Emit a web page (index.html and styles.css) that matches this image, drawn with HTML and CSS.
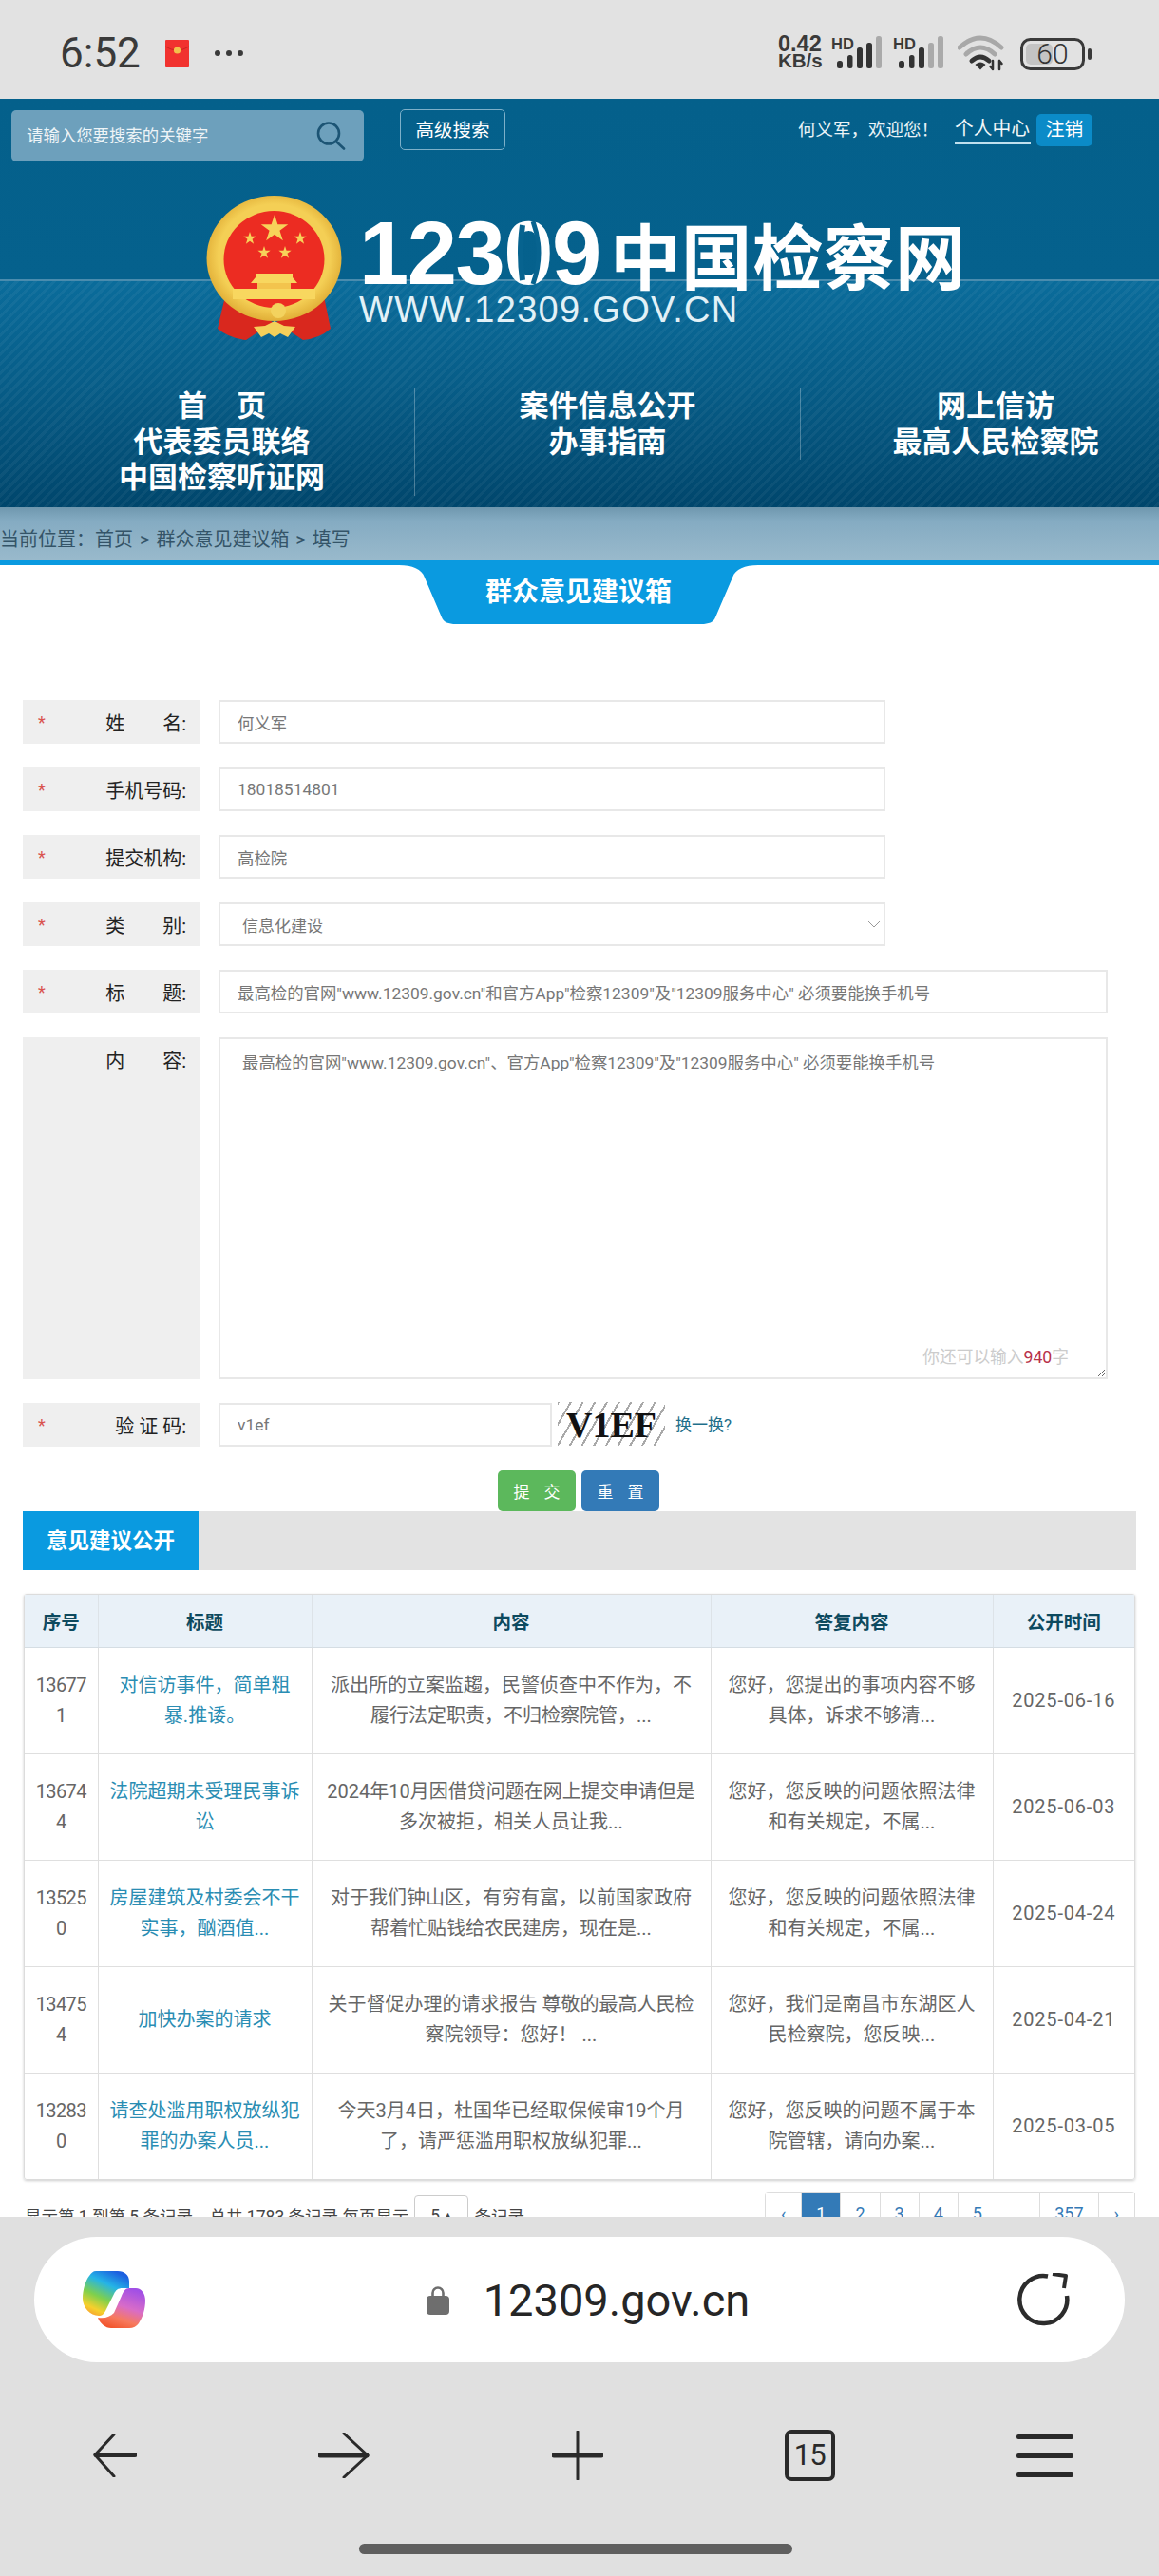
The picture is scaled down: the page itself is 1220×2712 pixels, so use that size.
FILE: index.html
```html
<!DOCTYPE html>
<html lang="zh-CN">
<head>
<meta charset="utf-8">
<title>群众意见建议箱</title>
<link rel="stylesheet" href="styles.css">
</head>
<body>
<div class="phone">
  <div class="statusbar">
    <div class="status-left">
      <span class="clock">6:52</span>
      <svg class="redpacket" width="25" height="29" viewBox="0 0 25 29"><rect width="25" height="29" rx="1" fill="#f1322f"/><path d="M0 7 Q12.5 15 25 7" fill="none" stroke="#c92523" stroke-width="1"/><circle cx="12.5" cy="11" r="3.6" fill="#f3c14b"/></svg>
      <span class="moredots"><i></i><i></i><i></i></span>
    </div>
    <div class="status-right">
      <div class="netspeed"><span class="speed">0.42</span><span class="unit">KB/s</span></div>
      <svg class="signal" width="56" height="36" viewBox="0 0 56 36"><text x="0" y="14" class="hd">HD</text><rect x="6" y="26" width="6" height="8" rx="2.5" fill="#333"/><rect x="17" y="20" width="5.500" height="14" rx="2.500" fill="#333"/><rect x="27" y="12" width="6" height="22" rx="2.500" fill="#333"/><rect x="37" y="7" width="6" height="27" rx="2.500" fill="#333"/><rect x="47" y="0" width="6" height="34" rx="2.500" fill="#aaa"/></svg>
      <svg class="signal" width="56" height="36" viewBox="0 0 56 36"><text x="0" y="14" class="hd">HD</text><rect x="6" y="26" width="6" height="8" rx="2.500" fill="#333"/><rect x="17" y="20" width="5.500" height="14" rx="2.500" fill="#333"/><rect x="27" y="12" width="6" height="22" rx="2.500" fill="#333"/><rect x="37" y="7" width="6" height="27" rx="2.500" fill="#aaa"/><rect x="47" y="0" width="6" height="34" rx="2.500" fill="#aaa"/></svg>
      <svg class="wifi" width="52" height="38" viewBox="0 0 52 38" fill="none" stroke-linecap="round"><path d="M2 13 Q24 -7 46 13" stroke="#a8a8a8" stroke-width="5"/><path d="M9 20 Q24 6 39 20" stroke="#a8a8a8" stroke-width="5"/><path d="M15 27 Q24 19 33 27" stroke="#333" stroke-width="5"/><path d="M20 31 L24 35 L28 31 Q24 28 20 31Z" fill="#333" stroke="#333" stroke-width="2"/><path d="M37 27V36M34.500 33L37 36M44 36V27M44 27L46.500 30" stroke="#333" stroke-width="2.500"/></svg>
      <svg class="battery" width="76" height="34" viewBox="0 0 76 34"><rect x="1.500" y="1.500" width="65" height="31" rx="9" fill="none" stroke="#3a3a3a" stroke-width="3"/><rect x="6" y="6" width="28" height="22" rx="5" fill="#c4c4c4"/><rect x="71" y="11" width="4" height="12" rx="2" fill="#3a3a3a"/><text x="34" y="27" class="batt">60</text></svg>
    </div>
  </div>

  <div class="viewport">
    <header class="site-header">
      <div class="toolbar">
        <div class="search">
          <span class="search-text">请输入您要搜索的关键字</span>
          <svg width="32" height="30" viewBox="0 0 32 30" fill="none" stroke="#1c5474" stroke-width="2.600"><ellipse cx="13" cy="12.500" rx="11" ry="11"/><path d="M21 21 L29 28.500" stroke-linecap="round"/></svg>
        </div>
        <a class="adv-search">高级搜索</a>
        <div class="userbar">
          <span class="welcome">何义军，欢迎您！</span>
          <a class="usercenter">个人中心</a>
          <a class="logout">注销</a>
        </div>
      </div>

      <div class="brand">
        <svg class="emblem" width="143" height="154" viewBox="0 0 143 154">
          <defs>
            <polygon id="star" points="0,-1 .2245,-.309 .951,-.309 .363,.118 .588,.809 0,.382 -.588,.809 -.363,.118 -.951,-.309 -.2245,-.309"/>
            <radialGradient id="gold" cx=".5" cy=".48" r=".55"><stop offset=".75" stop-color="#f4cf55"/><stop offset="1" stop-color="#dca62f"/></radialGradient>
          </defs>
          <path d="M20 106 L12 140 Q24 150 42 152 L60 140 L72 134 L84 140 L102 152 Q120 150 131 140 L124 106 L72 134Z" fill="#d9281e"/>
          <ellipse cx="71.500" cy="66" rx="71" ry="66" fill="url(#gold)"/>
          <ellipse cx="71.500" cy="67" rx="53" ry="51" fill="#ec2c22"/>
          <use href="#star" transform="translate(72 35) scale(15)" fill="#f7d25a"/>
          <use href="#star" transform="translate(46 45) scale(7)" fill="#f7d25a"/>
          <use href="#star" transform="translate(99 45) scale(7)" fill="#f7d25a"/>
          <use href="#star" transform="translate(61 60) scale(7)" fill="#f7d25a"/>
          <use href="#star" transform="translate(83 60) scale(7)" fill="#f7d25a"/>
          <path d="M52 82H91V86L96 92H47L52 86Z" fill="#f8d75f"/>
          <rect x="54" y="92" width="35" height="6" fill="#f3c44d"/>
          <path d="M28 98H115V109H28Z" fill="#f8d75f"/>
          <circle cx="76" cy="121" r="8" fill="#f3d25e"/>
          <path d="M50 138 L62 137 L72 132 L82 137 L94 138 L86 149 L78 145 L72 149 L66 145 L58 149Z" fill="#f4d05a"/>
        </svg>
        <div class="brand-text">
          <div class="brand-main"><span class="brand-num">12309</span><span class="brand-cn">中国检察网</span>
            <svg class="phone-slit" width="54" height="70" viewBox="0 0 54 70" fill="none"><path d="M22 6 Q18 35 22 64" stroke="#07638f" stroke-width="6"/><path d="M33 2 Q45 35 33 68" stroke="#07638f" stroke-width="5"/></svg>
          </div>
          <div class="brand-url">WWW.12309.GOV.CN</div>
        </div>
      </div>

      <nav class="mainnav">
        <ul>
          <li><a>首　页</a><a>代表委员联络</a><a>中国检察听证网</a></li>
          <li><a>案件信息公开</a><a>办事指南</a></li>
          <li><a>网上信访</a><a>最高人民检察院</a></li>
        </ul>
      </nav>
    </header>

    <div class="crumbs">当前位置：首页 &gt; 群众意见建议箱 &gt; 填写</div>
    <div class="tab-wrap"><h1 class="tab">群众意见建议箱</h1></div>

    <main class="content">
      <form class="form">
        <div class="row"><label class="lbl"><b>*</b><span>姓　　名:</span></label><input class="field w-mid" value="何义军"></div>
        <div class="row"><label class="lbl"><b>*</b><span>手机号码:</span></label><input class="field w-mid" value="18018514801"></div>
        <div class="row"><label class="lbl"><b>*</b><span>提交机构:</span></label><input class="field w-mid" value="高检院"></div>
        <div class="row"><label class="lbl"><b>*</b><span>类　　别:</span></label>
          <div class="selectbox w-mid"><span>信息化建设</span>
            <svg width="14" height="8" viewBox="0 0 14 8" fill="none" stroke="#999" stroke-width="1"><path d="M1 1L7 7L13 1"/></svg>
          </div>
        </div>
        <div class="row"><label class="lbl"><b>*</b><span>标　　题:</span></label><input class="field w-full" value="最高检的官网&quot;www.12309.gov.cn&quot;和官方App&quot;检察12309&quot;及&quot;12309服务中心&quot; 必须要能换手机号"></div>
        <div class="row row-tall"><label class="lbl lbl-top"><span>内　　容:</span></label>
          <div class="area-wrap">
            <textarea class="area">最高检的官网"www.12309.gov.cn"、官方App"检察12309"及"12309服务中心" 必须要能换手机号</textarea>
            <span class="counter">你还可以输入<em>940</em>字</span>
          </div>
        </div>
        <div class="row"><label class="lbl"><b>*</b><span>验 证 码:</span></label>
          <input class="field w-code" value="v1ef">
          <span class="captcha">V1EF</span>
          <a class="swap">换一换?</a>
        </div>
        <div class="actions"><button type="button" class="btn btn-ok">提 交</button><button type="button" class="btn btn-reset">重 置</button></div>
      </form>

      <div class="section-bar"><h2>意见建议公开</h2></div>

      <div class="table-wrap">
        <table class="list">
          <colgroup><col class="c1"><col class="c2"><col class="c3"><col class="c4"><col class="c5"></colgroup>
          <thead><tr><th>序号</th><th>标题</th><th>内容</th><th>答复内容</th><th>公开时间</th></tr></thead>
          <tbody>
            <tr><td class="seq">13677<br>1</td><td><a>对信访事件，简单粗<br>暴.推诿。</a></td><td>派出所的立案监趨，民警侦查中不作为，不<br>履行法定职责，不归检察院管，...</td><td>您好，您提出的事项内容不够<br>具体，诉求不够清...</td><td class="date">2025-06-16</td></tr>
            <tr><td class="seq">13674<br>4</td><td><a>法院超期未受理民事诉<br>讼</a></td><td>2024年10月因借贷问题在网上提交申请但是<br>多次被拒，相关人员让我...</td><td>您好，您反映的问题依照法律<br>和有关规定，不属...</td><td class="date">2025-06-03</td></tr>
            <tr><td class="seq">13525<br>0</td><td><a>房屋建筑及村委会不干<br>实事，酗酒值...</a></td><td>对于我们钟山区，有穷有富，以前国家政府<br>帮着忙贴钱给农民建房，现在是...</td><td>您好，您反映的问题依照法律<br>和有关规定，不属...</td><td class="date">2025-04-24</td></tr>
            <tr><td class="seq">13475<br>4</td><td><a>加快办案的请求</a></td><td>关于督促办理的请求报告 尊敬的最高人民检<br>察院领导：您好！ ...</td><td>您好，我们是南昌市东湖区人<br>民检察院，您反映...</td><td class="date">2025-04-21</td></tr>
            <tr><td class="seq">13283<br>0</td><td><a>请查处滥用职权放纵犯<br>罪的办案人员...</a></td><td>今天3月4日，杜国华已经取保候审19个月<br>了，请严惩滥用职权放纵犯罪...</td><td>您好，您反映的问题不属于本<br>院管辖，请向办案...</td><td class="date">2025-03-05</td></tr>
          </tbody>
        </table>
      </div>

      <div class="pager-row">
        <div class="summary"><span>显示第 1 到第 5 条记录，总共 1783 条记录 每页显示</span><span class="pagesize">5 ▴</span><span>条记录</span></div>
        <ul class="pagination"><li>‹</li><li class="active">1</li><li>2</li><li>3</li><li>4</li><li>5</li><li class="gap">...</li><li>357</li><li>›</li></ul>
      </div>
    </main>
  </div>

  <div class="browser">
    <div class="addressbar">
      <svg class="copilot" width="66" height="60" viewBox="0 0 66 60">
        <defs>
          <linearGradient id="cpA" x1=".7" y1="0" x2=".2" y2="1"><stop offset="0" stop-color="#1c5fe0"/><stop offset=".3" stop-color="#25b4e6"/><stop offset=".6" stop-color="#7fd04c"/><stop offset=".85" stop-color="#f6d02c"/><stop offset="1" stop-color="#f7a030"/></linearGradient>
          <linearGradient id="cpB" x1=".7" y1="0" x2=".3" y2="1"><stop offset="0" stop-color="#a04fe6"/><stop offset=".45" stop-color="#d86cc8"/><stop offset=".75" stop-color="#f77a5e"/><stop offset="1" stop-color="#f2552c"/></linearGradient>
        </defs>
        <path d="M14 0H37C44 0 49 4 49 11V18H42C37 18 35 20 33 24L24 42C22 46 20 47 17 47C8 47 0 38 0 29C0 20 3 10 7 5C9 2 11 0 14 0Z" fill="url(#cpA)"/>
        <path d="M49 18H56C62 18 66 24 66 31C66 40 63 49 59 55C57 58 53 60 49 60H30C24 60 18 55 16 49C24 50 29 48 33 44L41 26C43 21 45 18 49 18Z" fill="url(#cpB)"/>
      </svg>
      <div class="url">
        <svg width="24" height="31" viewBox="0 0 24 31"><path d="M6.500 14V8a5.500 5.500 0 0 1 11 0v6" fill="none" stroke="#6e6e6e" stroke-width="2.600"/><rect y="11" width="24" height="20" rx="4" fill="#6e6e6e"/></svg>
        <span>12309.gov.cn</span>
      </div>
      <svg class="reload" width="56" height="56" viewBox="0 0 56 56" fill="none" stroke="#2c2c2c" stroke-width="4.500"><path d="M32 3.500A25 25 0 1 0 52 24"/><path d="M37 1L51 3L49 16" stroke-linejoin="round" stroke-width="4"/></svg>
    </div>
    <div class="toolrow">
      <svg width="46" height="46" viewBox="0 0 46 46" fill="none" stroke="#2a2a2a"><path d="M22 1L2 22.500L22 45" stroke-width="3" stroke-linecap="round" stroke-linejoin="round"/><path d="M3 22.500H44" stroke-width="5" stroke-linecap="round"/></svg>
      <svg width="54" height="48" viewBox="0 0 54 48" fill="none" stroke="#2a2a2a"><path d="M27 1L52 24L27 47" stroke-width="3" stroke-linecap="round" stroke-linejoin="round"/><path d="M2 24H51" stroke-width="5" stroke-linecap="round"/></svg>
      <svg width="54" height="52" viewBox="0 0 54 52" fill="none" stroke="#2a2a2a"><path d="M27 1V51" stroke-width="3" stroke-linecap="round"/><path d="M2 26H52" stroke-width="5" stroke-linecap="round"/></svg>
      <div class="tabcount">15</div>
      <div class="menu"><i></i><i></i><i></i></div>
    </div>
    <div class="homebar"></div>
  </div>
</div>
</body>
</html>
```
FILE: styles.css
```css
* { box-sizing: border-box; }
html, body { margin: 0; padding: 0; }
body { font-family: Roboto, "Noto Sans CJK SC", sans-serif; background: #fff; color: #333; }
.phone { width: 1220px; height: 2712px; display: flex; flex-direction: column; overflow: hidden; }

/* status bar */
.statusbar { height: 104px; flex: none; background: #e2e2e2; display: flex; justify-content: space-between; align-items: flex-start; padding: 0 70px 0 63px; }
.status-left { display: flex; align-items: center; height: 56px; margin-top: 28px; }
.clock { font-size: 44px; font-weight: 400; line-height: 56px; color: #3a3a3a; width: 111px; white-space: nowrap; }
.redpacket { display: block; }
.moredots { display: flex; gap: 6px; margin-left: 27px; }
.moredots i { width: 6px; height: 6px; border-radius: 50%; background: #3a3a3a; }
.status-right { display: flex; align-items: flex-start; margin-top: 38px; position: relative; }
.netspeed { display: flex; flex-direction: column; font-family: "Liberation Sans", sans-serif; font-weight: 700; line-height: 17px; color: #3a3a3a; width: 56px; }
.speed { font-size: 23.500px; }
.unit { font-size: 20.500px; }
.signal { display: block; margin-right: 9px; }
.hd { font: 700 16.500px "Liberation Sans", sans-serif; fill: #3a3a3a; }
.wifi { display: block; margin: -1px 14px 0 3px; }
.battery { display: block; margin-top: 2px; }
.batt { font: 300 30px Roboto, sans-serif; fill: #333; text-anchor: middle; }

.viewport { height: 2230px; flex: none; overflow: hidden; background: #fff; }

/* header */
.site-header { height: 430px; padding-top: 11px; display: flex; flex-direction: column; overflow: hidden;
  background:
    linear-gradient(#04608b, #05618d) top / 100% 190px no-repeat,
    linear-gradient(#4a8cae, #4a8cae) 0 190px / 100% 2px no-repeat,
    repeating-linear-gradient(135deg, rgba(255,255,255,.045) 0 3px, rgba(255,255,255,0) 3px 7px),
    linear-gradient(#0a6c9b 192px, #075d88 300px, #00466c 100%);
}
.toolbar { height: 55px; flex: none; display: flex; align-items: flex-start; padding-left: 12px; color: #fff; }
.search { width: 371px; height: 54px; margin-top: 1px; background: #6da0bc; border-radius: 5px; display: flex; align-items: center; justify-content: space-between; padding: 0 18px 0 16px; }
.search-text { font-size: 17.400px; color: #eef4f7; padding-bottom: 4px; }
.adv-search { margin-left: 38px; width: 111px; height: 43px; border: 1px solid #7db0c9; border-radius: 5px; font-size: 19.500px; line-height: 44px; text-align: center; color: #fff; }
.userbar { display: flex; align-items: flex-start; margin-left: 308px; margin-top: 5px; }
.welcome { font-size: 18.500px; line-height: 34px; color: #eaf3f7; width: 165px; white-space: nowrap; }
.usercenter { font-size: 19.800px; line-height: 31px; width: 80px; height: 32px; border-bottom: 2px solid #bfe0ee; color: #f2f8fa; white-space: nowrap; }
.logout { margin-left: 6px; width: 59px; height: 34px; background: #0b8bc8; border-radius: 5px; font-size: 19.800px; line-height: 34px; text-align: center; }

.brand { display: flex; align-items: flex-start; margin: 36px 0 0 217px; flex: none; }
.emblem { display: block; flex: none; }
.brand-text { margin: 23px 0 0 18px; color: #fff; }
.brand-main { position: relative; display: flex; align-items: center; height: 76px; white-space: nowrap; }
.brand-num { font: 700 94px/76px "Liberation Sans", sans-serif; width: 264px; letter-spacing: -1.500px; }
.brand-cn { font: 700 74.500px/76px "Noto Sans CJK SC", sans-serif; letter-spacing: .5px; }
.phone-slit { position: absolute; left: 150px; top: 2px; }
.brand-url { font: 400 38px/38px "Liberation Sans", sans-serif; letter-spacing: 1.300px; color: #e2f1f7; margin-top: 2px; white-space: nowrap; }

.mainnav { margin-top: 49px; flex: none; }
.mainnav ul { list-style: none; margin: 0 0 0 31px; padding: 0; display: grid; grid-template-columns: 406px 406px 410px; align-items: start; }
.mainnav li { text-align: center; border-right: 1px solid rgba(255,255,255,.28); }
.mainnav li:last-child { border-right: 0; }
.mainnav a { display: block; font-size: 31px; font-weight: 700; line-height: 37.500px; color: #fff; white-space: nowrap; }

/* crumbs + tab */
.crumbs { height: 57px; background: linear-gradient(#6f97ae 0, #84abc2 14px, #9abacc 100%); font-size: 20px; line-height: 68px; color: #345468; white-space: nowrap; word-spacing: 2px; }
.tab-wrap { border-top: 5px solid #0a9ae0; display: flex; justify-content: center; height: 67px; margin-top: -1px; }
.tab { width: 378px; height: 62px; margin: 0 0 0 -2px; background: #0a9ae0; color: #fff; font-size: 28px; font-weight: 700; line-height: 58px; text-align: center;
  clip-path: path("M0 0C14 0 24 4 27 13L45 55C47 60 52 62 60 62L318 62C326 62 331 60 333 55L351 13C354 4 364 0 378 0Z"); }

.content { padding: 80px 24px 0; }
.row { display: flex; align-items: stretch; height: 46px; margin-bottom: 25px; }
.row-tall { height: 360px; }
.lbl { width: 187px; flex: none; margin-right: 19px; background: #efefef; display: flex; align-items: center; justify-content: space-between; padding: 0 15px 0 16px; font-size: 20px; color: #222; white-space: nowrap; }
.lbl-top { align-items: flex-start; justify-content: flex-end; padding-top: 9px; }
.lbl b { color: #d9534f; font-size: 18px; font-weight: 400; }
.field { height: 46px; border: 2px solid #e8e8e8; background: #fff; padding: 0 18px; font: 17.400px Roboto, "Noto Sans CJK SC", sans-serif; color: #777; outline: 0; }
.w-mid { width: 702px; }
.w-full { width: 936px; }
.w-code { width: 351px; }
.selectbox { height: 46px; border: 2px solid #e8e8e8; display: flex; align-items: center; justify-content: space-between; padding: 0 3px 0 23px; font-size: 17px; color: #777; }
.area-wrap { position: relative; width: 936px; }
.area { display: block; width: 100%; height: 100%; border: 2px solid #e8e8e8; padding: 12px 23px; font: 17.400px/1.500 Roboto, "Noto Sans CJK SC", sans-serif; color: #777; outline: 0; }
.counter { position: absolute; right: 41px; bottom: 12px; font-size: 17.700px; color: #ccc; white-space: nowrap; }
.counter em { font-style: normal; color: #b8324a; }
.captcha { width: 113px; margin-left: 6px; margin-top: -1px; height: 46px; font: 700 38px/48px "Liberation Serif", serif; color: #111; text-align: center;
  background: repeating-linear-gradient(120deg, #a9a9a9 0 2px, #fff 2px 11px); }
.swap { margin-left: 11px; font-size: 17px; line-height: 46px; color: #1f6f8b; white-space: nowrap; }
.actions { display: flex; justify-content: center; gap: 6px; height: 43px; margin-left: -2px; }
.btn { width: 82px; height: 43px; border: 0; border-radius: 5px; color: #fff; font: 17px "Noto Sans CJK SC", sans-serif; word-spacing: 11px; padding: 0; }
.btn-ok { background: #5cb85c; }
.btn-reset { background: #337ab7; }

.section-bar { height: 62px; background: #e3e3e3; margin-bottom: 25px; }
.section-bar h2 { margin: 0; width: 185px; height: 62px; background: #0a9ae0; color: #fff; font-size: 22.500px; font-weight: 700; line-height: 62px; text-align: center; }

.table-wrap { width: 1170px; margin-left: 1px; border: 1px solid #dcdcdc; border-radius: 3px; box-shadow: 0 1px 3px rgba(0,0,0,.2); }
.list { width: 100%; table-layout: fixed; border-collapse: collapse; }
.c1 { width: 77px; } .c2 { width: 225px; } .c3 { width: 420px; } .c4 { width: 297px; } .c5 { width: 149px; }
.list th { height: 55px; background: #e9f1f8; color: #0d4a5f; font-size: 19.500px; font-weight: 700; border-left: 1px solid #dde3e8; border-bottom: 1px solid #d5dde3; }
.list td { height: 112px; padding: 0; text-align: center; font-size: 20px; line-height: 32px; color: #666; border-left: 1px solid #dfdfdf; border-top: 1px solid #dfdfdf; white-space: nowrap; }
.list th:first-child, .list td:first-child { border-left: 0; }
.list a { color: #2a8db3; }
.list .seq { letter-spacing: -.6px; }
.list .date { letter-spacing: .8px; }

.pager-row { display: flex; justify-content: space-between; margin: 13px 1px 0 2px; }
.summary { display: flex; align-items: center; height: 42px; margin-top: 3px; font-size: 17.500px; color: #444; white-space: nowrap; }
.pagesize { width: 57px; height: 42px; margin: 0 6px; border: 1px solid #ccc; border-radius: 4px; text-align: center; line-height: 42px; }
.pagination { list-style: none; display: flex; margin: 0; padding: 0; height: 44px; border: 1px solid #ddd; border-right: 0; border-radius: 4px; font-size: 18px; line-height: 44px; color: #337ab7; }
.pagination li { padding: 0 15px; border-right: 1px solid #ddd; background: #fff; }
.pagination li:first-child, .pagination li:last-child { padding: 0 16px; }
.pagination .active { background: #337ab7; color: #fff; }
.pagination .gap { padding: 0 15px; }

/* browser chrome */
.browser { flex: 1; background: #e0e0e0; padding-top: 21px; }
.addressbar { height: 132px; margin: 0 36px; border-radius: 66px; background: #fff; display: flex; align-items: center; justify-content: space-between; padding: 0 57px 0 51px; }
.copilot { display: block; flex: none; }
.url { display: flex; align-items: center; gap: 36px; font-size: 47px; color: #262626; margin-left: 14px; }
.url svg { display: block; }
.reload { display: block; flex: none; }
.toolrow { display: flex; justify-content: space-between; align-items: center; height: 54px; margin-top: 71px; padding: 0 90px 0 98px; }
.toolrow svg { display: block; }
.tabcount { width: 53px; height: 54px; border: 4px solid #2a2a2a; border-radius: 7px; font-size: 31px; line-height: 46px; text-align: center; color: #2a2a2a; letter-spacing: -1px; }
.menu { width: 60px; display: flex; flex-direction: column; gap: 15px; }
.menu i { display: block; height: 5px; background: #2a2a2a; border-radius: 2px; }
.homebar { width: 456px; height: 11px; margin: 66px 0 0 378px; border-radius: 6px; background: #5f5f5f; }
```
